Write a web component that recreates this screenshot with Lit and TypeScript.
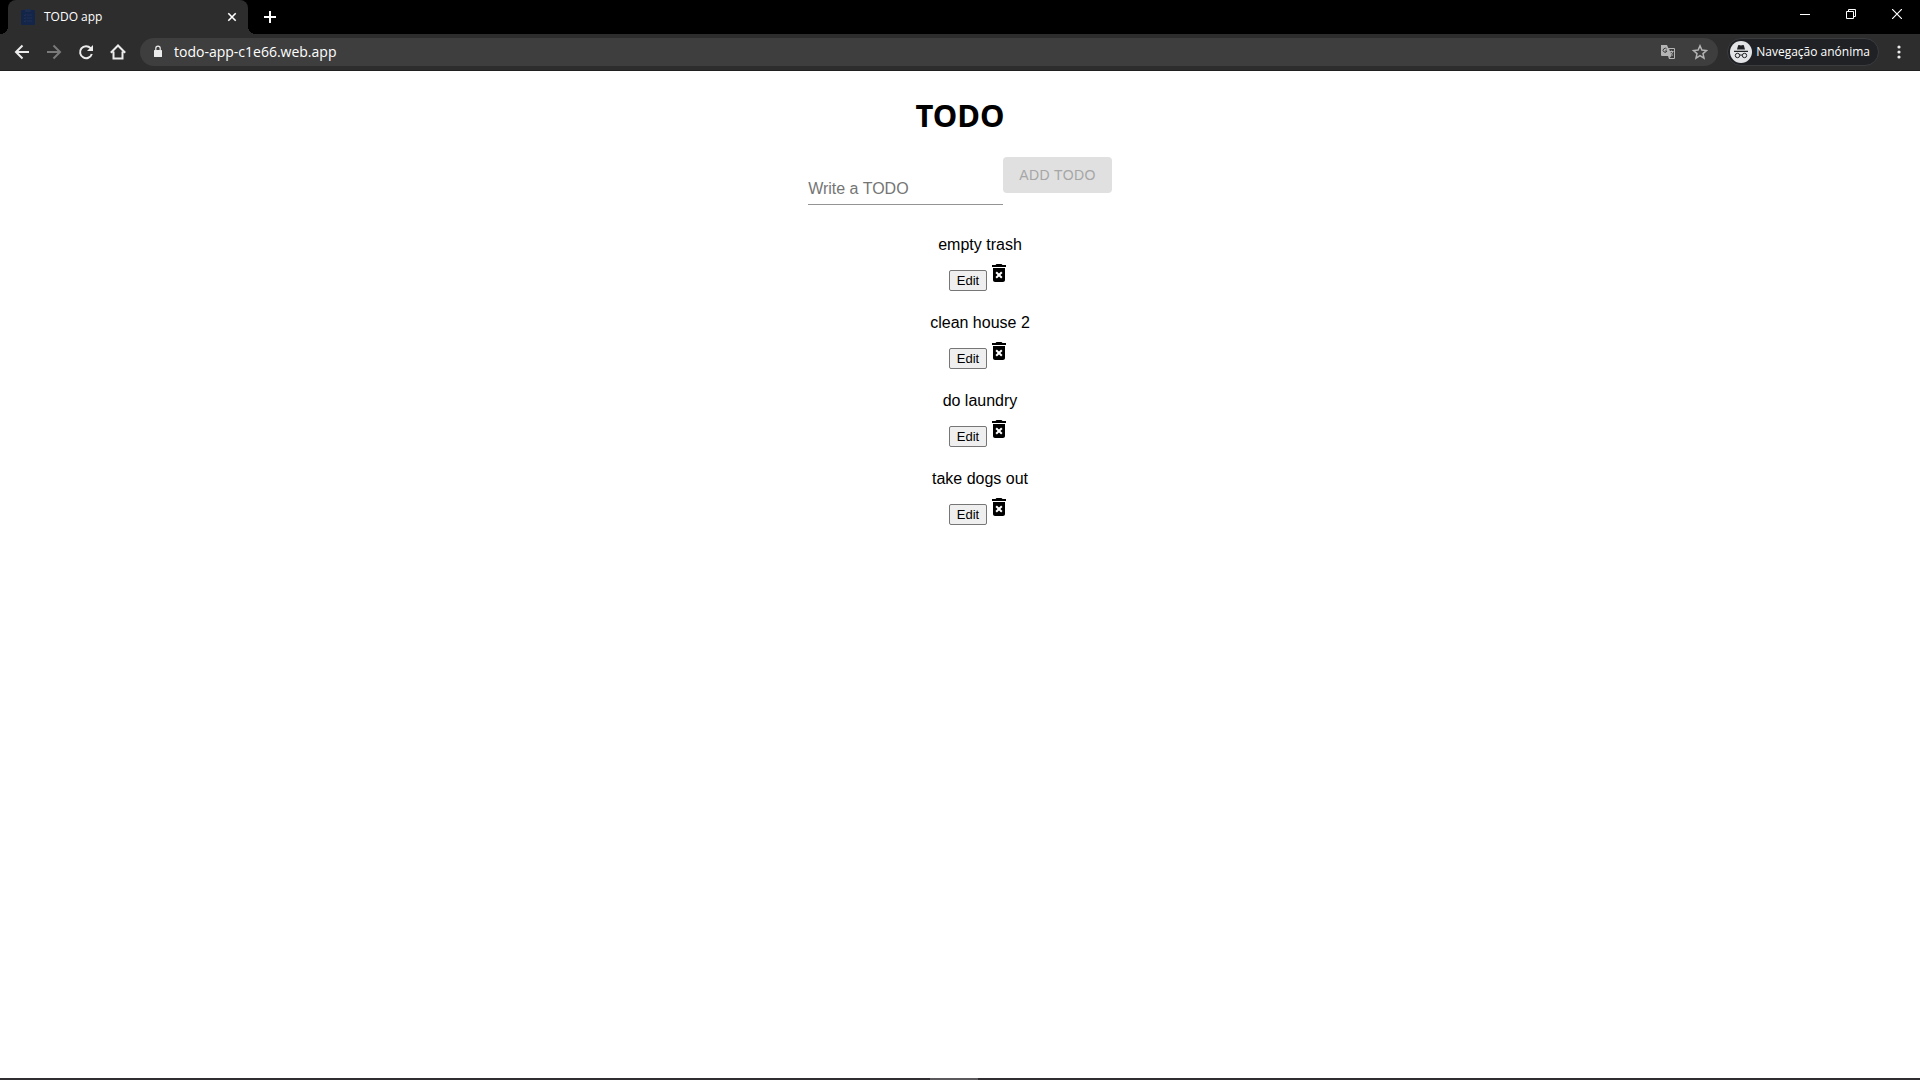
import { LitElement, html, css, svg } from "lit";
import { customElement, property, state } from "lit/decorators.js";

const stroked = (body: unknown) => html`<svg viewBox="0 0 16 16" width="16" height="16" fill="none" stroke="currentColor" stroke-width="2" aria-hidden="true">${body}</svg>`;

@customElement("browser-chrome")
class BrowserChrome extends LitElement {
  static styles = css`
    :host { display: block; color: #fff; font: 12px/16px "Open Sans", "Noto Sans", sans-serif; }
    button { all: unset; box-sizing: border-box; display: flex; align-items: center; justify-content: center; }
    svg { display: block; flex: none; }
    .strip { display: flex; height: 34px; background: #000; }
    .tab { position: relative; display: flex; align-items: center; box-sizing: border-box; width: 240px; margin-left: 8px; padding: 0 8px 0 13px; background: #2d2d2d; border-radius: 8px 8px 0 0; }
    .tab::before, .tab::after { content: ""; position: absolute; bottom: 0; width: 8px; height: 8px; }
    .tab::before { right: 100%; background: radial-gradient(circle at 0 0, transparent 8px, #2d2d2d 8px); }
    .tab::after { left: 100%; background: radial-gradient(circle at 100% 0, transparent 8px, #2d2d2d 8px); }
    .title { flex: 1; margin-left: 9px; }
    .close { width: 16px; height: 16px; }
    .plus { width: 28px; margin-left: 8px; }
    .windows { display: flex; margin-left: auto; }
    .windows button { width: 46px; height: 28px; }
    .bar { display: flex; align-items: center; box-sizing: border-box; height: 37px; padding: 0 13px 0 6px; background: #2d2d2d; border-bottom: 1px solid #221f20; }
    .nav { display: flex; color: #ececec; }
    .nav button { width: 32px; height: 28px; }
    .nav .off { color: #7a7a7a; }
    .address { display: flex; flex: 1; align-items: center; height: 28px; margin-left: 6px; padding: 0 10px; border-radius: 14px; background: #3e3e3e; }
    .url { all: unset; flex: 1; margin-left: 8px; font-size: 14px; line-height: 20px; }
    .address button { width: 16px; margin-left: 16px; color: #b4b4b4; }
    .profile { display: flex; align-items: center; gap: 4px; box-sizing: border-box; height: 28px; margin-left: 9px; padding: 0 8px 0 2px; border: 1px solid #3a3c3f; border-radius: 14px; background: #202124; }
    .more { width: 16px; margin-left: 12px; }
  `;
  render() {
    return html`
      <div class="strip">
        <div class="tab">
          <svg viewBox="0 0 14 16" width="14" height="16" aria-hidden="true"><rect y="1" width="14" height="15" rx="1" fill="#14254a"/><rect x="4" width="6" height="3" rx="1" fill="#1c2d50"/><path d="M3 6l1 1 1-2M6 6h5M3 9l1 1 1-2M6 9h5M3 12l1 1 1-2M6 12h5" fill="none" stroke="#243456" stroke-width=".8"/></svg>
          <span class="title">TODO app</span>
          <button class="close" aria-label="Close tab">${stroked(svg`<path d="M4.3 4.3l7.4 7.4M11.7 4.3l-7.4 7.4" stroke-width="1.6"/>`)}</button>
        </div>
        <button class="plus" aria-label="New tab">${stroked(svg`<path d="M8 2v12M2 8h12"/>`)}</button>
        <div class="windows">
          <button aria-label="Minimize"><svg width="10" height="10"><path d="M0 5.5h10" stroke="#fff"/></svg></button>
          <button aria-label="Restore"><svg width="10" height="10" fill="none" stroke="#fff"><path d="M.5 2.5h7v7h-7zM2.5 2.5v-2h7v7h-2"/></svg></button>
          <button aria-label="Close"><svg width="10" height="10" fill="none" stroke="#fff"><path d="M0 0l10 10M10 0L0 10" stroke-width="1.2"/></svg></button>
        </div>
      </div>
      <div class="bar">
        <div class="nav">
          <button aria-label="Back">${stroked(svg`<path d="M15 8H2.5M8.5 1.5L2 8l6.5 6.5"/>`)}</button>
          <button class="off" aria-label="Forward">${stroked(svg`<path d="M1 8h12.5M7.5 1.5L14 8l-6.5 6.5"/>`)}</button>
          <button aria-label="Reload">${stroked(svg`<path d="M12.6 4.2A6 6 0 1 0 13.8 10"/><path d="M15 1v6H9z" fill="currentColor" stroke="none"/>`)}</button>
          <button aria-label="Home">${stroked(svg`<path d="M.8 8.7L8 1.5l7.2 7.2M3.5 7.5V14.5h9V7.5"/>`)}</button>
        </div>
        <div class="address">
          <svg viewBox="0 0 16 16" width="16" height="16" aria-hidden="true"><path d="M4.5 6h7q.5 0 .5.5v6q0 .5-.5.5h-7q-.5 0-.5-.5v-6q0-.5.5-.5z" fill="#ececec"/><path d="M5.8 6.5V4.3a2.2 2.2 0 0 1 4.4 0V6.5" fill="none" stroke="#ececec" stroke-width="1.2"/></svg>
          <input class="url" aria-label="Address" value="todo-app-c1e66.web.app">
          <button aria-label="Translate"><svg viewBox="0 0 16 16" width="16" height="16"><path d="M1 1h6l1.3 3H14q1 0 1 1v9q0 1-1 1H9l-1-3H2q-1 0-1-1z" fill="#b4b4b4"/><path d="M8.7 5H14v9H9.6l2-2.2L9.2 5z" fill="#3e3e3e"/><path d="M6.8 5.2A2 2 0 1 0 7 7H5" fill="none" stroke="#3e3e3e"/><path d="M9.5 7.5h4M11.5 6.5v1M12.8 7.5q-.6 2-2.3 3.3M10.5 8.5q1 2 2.5 3" fill="none" stroke="#b4b4b4"/></svg></button>
          <button aria-label="Bookmark">${stroked(svg`<path d="M8 1.8l1.9 4.3 4.6.4-3.5 3.1 1 4.5L8 11.7l-4 2.4 1-4.5L1.5 6.5l4.600-.4z" stroke-width="1.5"/>`)}</button>
        </div>
        <div class="profile">
          <svg viewBox="0 0 22 22" width="22" height="22" aria-hidden="true"><circle cx="11" cy="11" r="11" fill="#e3e4e6"/><path d="M7 8.5l1.1-4q.2-.6.9-.4l2 .5 2-.5q.7-.2.9.4l1.1 4zM4 9.8h14V11H4z" fill="#202124"/><g fill="none" stroke="#202124"><circle cx="7.5" cy="14.5" r="2.2"/><circle cx="14.5" cy="14.5" r="2.2"/><path d="M9.7 14.3q1.3-.8 2.6 0"/></g></svg>
          <span>Navegação anónima</span>
        </div>
        <button class="more" aria-label="Menu"><svg width="4" height="14" fill="#ececec"><circle cx="2" cy="2" r="1.6"/><circle cx="2" cy="7" r="1.6"/><circle cx="2" cy="12" r="1.6"/></svg></button>
      </div>`;
  }
}

@customElement("todo-item")
class TodoItem extends LitElement {
  @property() text = "";
  static styles = css`
    :host { display: flex; flex-direction: column; align-items: center; gap: 7px; height: 59px; padding: 10px 0 9px; color: #000; font: 16px/18px "Liberation Sans", Arial, sans-serif; }
    .actions { display: flex; align-items: flex-start; }
    .edit { box-sizing: border-box; height: 21px; margin-top: 9px; padding: 0 7px; border: 1px solid #767676; border-radius: 2px; background: #efefef; color: #000; font: 13px/16px "Liberation Sans", Arial, sans-serif; }
    .remove { all: unset; display: block; width: 24px; height: 24px; }
    svg { display: block; }
  `;
  render() {
    return html`
      <span>${this.text}</span>
      <div class="actions">
        <button class="edit">Edit</button>
        <button class="remove" aria-label="Delete"><svg viewBox="0 0 24 24" width="24" height="24"><path d="M6 19c0 1.1.9 2 2 2h8c1.1 0 2-.9 2-2V7H6v12zm2.460-7.120l1.410-1.410L12 12.590l2.120-2.120 1.410 1.410L13.410 14l2.120 2.120-1.410 1.410L12 15.410l-2.120 2.120-1.410-1.410L10.590 14l-2.130-2.120zM15.500 4l-1-1h-5l-1 1H5v2h14V4z"/></svg></button>
      </div>`;
  }
}

@customElement("app-root")
class AppRoot extends LitElement {
  @state() private todos = ["empty trash", "clean house 2", "do laundry", "take dogs out"];
  static styles = css`
    :host { display: flex; flex-direction: column; min-height: 100vh; background: #fff; }
    main { flex: 1; display: flex; flex-direction: column; align-items: center; font: 16px/18px "Liberation Sans", Arial, sans-serif; }
    h1 { margin: 22px 0 20px; color: #000; font: bold 31px/44px "Noto Sans", "Open Sans", sans-serif; }
    form { display: flex; align-items: flex-start; }
    .field { box-sizing: border-box; width: 195px; height: 32px; margin-top: 16px; padding: 6px 0 5px; border: 0; border-bottom: 1px solid #949494; border-radius: 0; outline: 0; background: none; font: inherit; }
    .field::placeholder { color: #757575; opacity: 1; }
    .add { height: 36px; padding: 0 16px; border: 0; border-radius: 4px; background: #e0e0e0; color: #a6a6a6; font: 14px/24px "Liberation Sans", Arial, sans-serif; letter-spacing: 0.03em; }
    ul { margin: 21px 0 0; padding: 0 0 0 40px; list-style: none; }
    .taskbar { display: flex; justify-content: center; height: 2px; background: #302e31; }
    .handle { width: 48px; margin-right: 12px; background: #5b595c; }
  `;
  render() {
    return html`
      <browser-chrome></browser-chrome>
      <main>
        <h1>TODO</h1>
        <form @submit=${(e: Event) => e.preventDefault()}>
          <input class="field" aria-label="Write a TODO" placeholder="Write a TODO">
          <button class="add" disabled>ADD TODO</button>
        </form>
        <ul>${this.todos.map((t) => html`<li><todo-item .text=${t}></todo-item></li>`)}</ul>
      </main>
      <div class="taskbar"><div class="handle"></div></div>`;
  }
}
